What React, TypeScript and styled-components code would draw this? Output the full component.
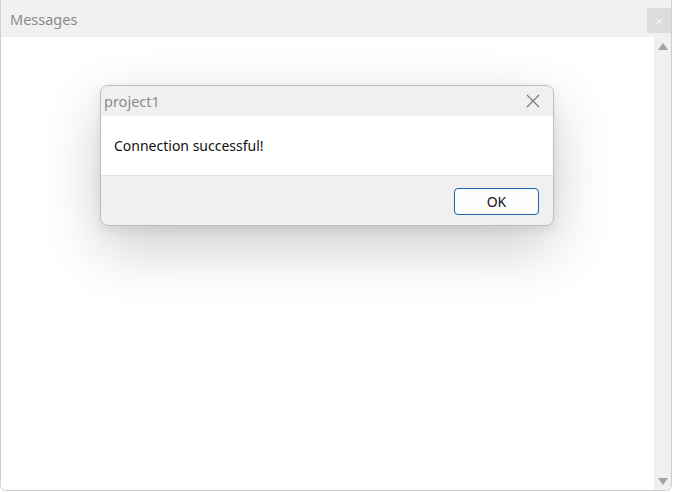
import styled, { createGlobalStyle } from 'styled-components';

const GlobalStyle = createGlobalStyle`
  html, body {
    margin: 0;
    padding: 0;
    background: #ffffff;
  }
  body {
    font-family: 'Noto Sans', 'Open Sans', sans-serif;
  }
`;

const Window = styled.div`
  width: 672px;
  height: 491px;
  box-sizing: border-box;
  border: 1px solid #cfcfcf;
  border-top: none;
  border-radius: 0 0 6px 6px;
  display: flex;
  flex-direction: column;
  overflow: hidden;
  background: #fff;
`;

const TitleBar = styled.div`
  height: 37px;
  flex-shrink: 0;
  background: #f1f1f1;
  display: flex;
  align-items: center;
  justify-content: space-between;
  padding: 0 0 0 9px;
`;

const WindowTitle = styled.div`
  font-size: 14.5px;
  color: #8a8a8a;
`;

const CloseBox = styled.div`
  width: 24px;
  height: 25px;
  margin-top: 4px;
  background: #dcdcdc;
  color: #f4f4f4;
  display: flex;
  align-items: center;
  justify-content: center;
  font-size: 10px;
`;

const Body = styled.div`
  flex: 1;
  display: flex;
  position: relative;
`;

const Content = styled.div`
  flex: 1;
  background: #fff;
`;

const ScrollBar = styled.div`
  width: 17px;
  background: #f0f0f0;
  display: flex;
  flex-direction: column;
  justify-content: space-between;
  align-items: center;
  padding: 6px 0 5px;
`;

const Arrow = styled.div<{ $down?: boolean }>`
  width: 0;
  height: 0;
  border-left: 5px solid transparent;
  border-right: 5px solid transparent;
  ${(p) =>
    p.$down
      ? 'border-top: 7px solid #a3a3a3;'
      : 'border-bottom: 7px solid #a3a3a3;'}
`;

const Dialog = styled.div`
  position: absolute;
  left: 99px;
  top: 48px;
  width: 454px;
  height: 141px;
  box-sizing: border-box;
  border: 1px solid #bdbdbd;
  border-radius: 8px;
  overflow: hidden;
  display: flex;
  flex-direction: column;
  box-shadow: 0 22px 60px rgba(0, 0, 0, 0.2), 0 4px 12px rgba(0, 0, 0, 0.08);
  background: #f0f0f0;
`;

const DialogHead = styled.div`
  height: 30px;
  display: flex;
  align-items: center;
  justify-content: space-between;
  padding: 0 13px 0 3px;
  background: #f0f0f0;
`;

const DialogTitle = styled.div`
  font-size: 14.5px;
  color: #8c8c8c;
`;

const DialogMessage = styled.div`
  height: 59px;
  background: #fff;
  display: flex;
  align-items: center;
  padding-left: 13px;
  font-size: 14px;
  color: #111;
  border-bottom: 1px solid #e3e3e3;
`;

const DialogFoot = styled.div`
  flex: 1;
  display: flex;
  align-items: center;
  justify-content: flex-end;
  padding-right: 14px;
`;

const OkButton = styled.button`
  width: 85px;
  height: 27px;
  border: 1px solid #1a64a8;
  border-radius: 4px;
  background: #fdfdfd;
  font-family: 'Noto Sans', 'Open Sans', sans-serif;
  font-size: 14px;
  color: #111;
  padding: 0;
  margin-top: 1px;
`;

const X = () => (
  <svg width="14" height="14" viewBox="0 0 14 14">
    <path d="M1 1 L13 13 M13 1 L1 13" stroke="#7a7a7a" strokeWidth="1.2" fill="none" />
  </svg>
);

export default function App() {
  return (
    <>
      <GlobalStyle />
      <Window>
        <TitleBar>
          <WindowTitle>Messages</WindowTitle>
          <CloseBox>✕</CloseBox>
        </TitleBar>
        <Body>
          <Content />
          <ScrollBar>
            <Arrow />
            <Arrow $down />
          </ScrollBar>
          <Dialog>
            <DialogHead>
              <DialogTitle>project1</DialogTitle>
              <X />
            </DialogHead>
            <DialogMessage>Connection successful!</DialogMessage>
            <DialogFoot>
              <OkButton>OK</OkButton>
            </DialogFoot>
          </Dialog>
        </Body>
      </Window>
    </>
  );
}
